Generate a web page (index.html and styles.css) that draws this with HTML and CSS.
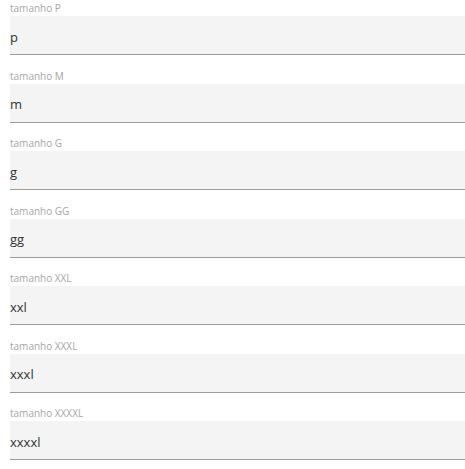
FILE: index.html
```html
<!DOCTYPE html>
<html lang="pt">
<head>
<meta charset="utf-8">
<link rel="stylesheet" href="styles.css">
</head>
<body>
<form class="sizes">
  <label class="field"><span class="field-label">tamanho P</span><input class="field-input" type="text" value="p"></label>
  <label class="field"><span class="field-label">tamanho M</span><input class="field-input" type="text" value="m"></label>
  <label class="field"><span class="field-label">tamanho G</span><input class="field-input" type="text" value="g"></label>
  <label class="field"><span class="field-label">tamanho GG</span><input class="field-input" type="text" value="gg"></label>
  <label class="field"><span class="field-label">tamanho XXL</span><input class="field-input" type="text" value="xxl"></label>
  <label class="field"><span class="field-label">tamanho XXXL</span><input class="field-input" type="text" value="xxxl"></label>
  <label class="field"><span class="field-label">tamanho XXXXL</span><input class="field-input" type="text" value="xxxxl"></label>
</form>
</body>
</html>
```
FILE: styles.css
```css
html, body {
  margin: 0;
  padding: 0;
  background: #ffffff;
}
body {
  font-family: "Open Sans", "Noto Sans", sans-serif;
  overflow: hidden;
}
.sizes {
  display: flex;
  flex-direction: column;
  gap: 12.5px;
  padding-left: 10px;
}
.field {
  display: flex;
  flex-direction: column;
}
.field-label {
  font-size: 10px;
  line-height: 16px;
  color: #a5a5a5;
}
.field-input {
  box-sizing: border-box;
  width: 100%;
  height: 39px;
  margin: 0;
  padding: 3px 0 0 0;
  border: none;
  border-bottom: 1px solid #9b9b9b;
  background: #f4f4f4;
  font-family: "Open Sans", "Noto Sans", sans-serif;
  font-size: 13px;
  color: #333333;
  outline: none;
}
```
